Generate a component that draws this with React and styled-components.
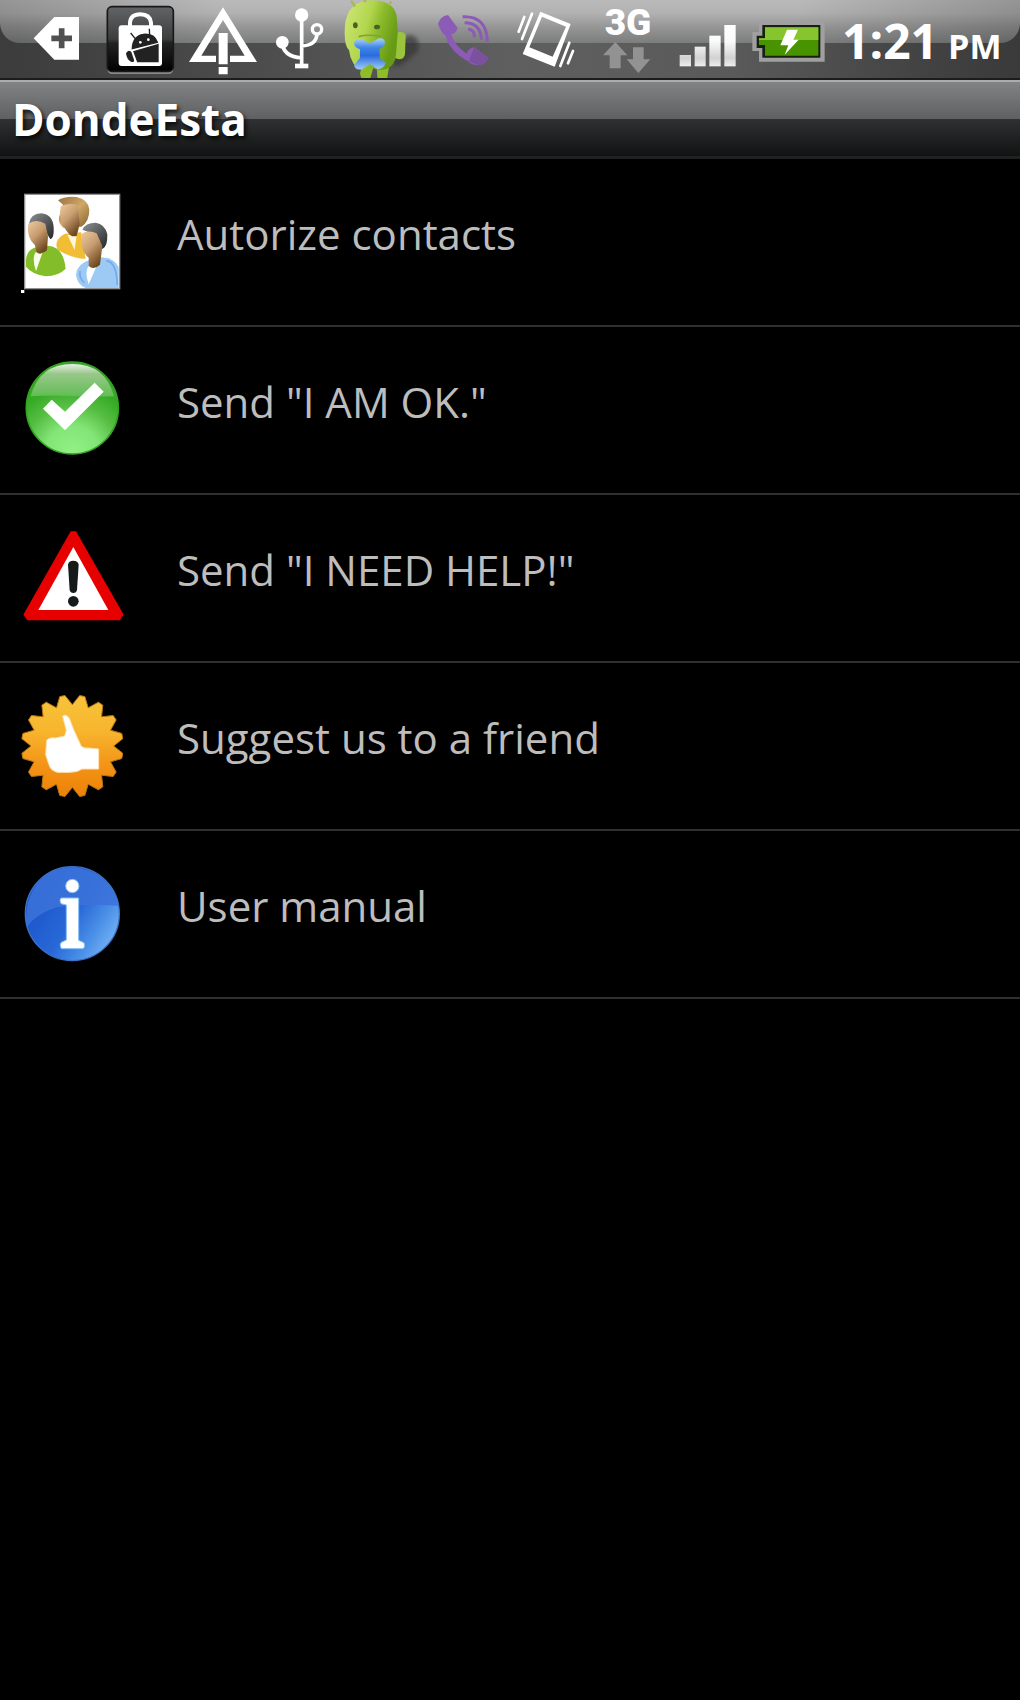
import React from "react";
import styled, { createGlobalStyle } from "styled-components";

const GlobalStyle = createGlobalStyle`
  * { box-sizing: border-box; }
  body {
    margin: 0;
    background: #000;
    font-family: "Open Sans", "Noto Sans", sans-serif;
  }
`;

const Screen = styled.div`
  min-height: 100vh;
  background: #000;
`;

const StatusBar = styled.header`
  position: relative;
  display: flex;
  justify-content: space-between;
  height: 80px;
  padding: 0 20px 0 24px;
  border-bottom: 2px solid #1c1c1c;
  background: linear-gradient(90deg, #3c3c3c 0%, #4a4a4a 22%, #5e5f5e 50%, #5a5a5a 72%, #434343 90%, #3a3a3a 100%);
  overflow: hidden;

  &::before {
    content: "";
    position: absolute;
    inset: 0 0 auto;
    height: 43px;
    border-radius: 0 0 20px 20px;
    background:
      linear-gradient(90deg, rgba(0, 0, 0, 0.2) 0%, rgba(0, 0, 0, 0) 22%, rgba(0, 0, 0, 0) 78%, rgba(0, 0, 0, 0.2) 100%),
      linear-gradient(180deg, #bababa 0%, #b2b2b2 30%, #949494 65%, #7c7d7d 100%);
  }
`;

const StatusGroup = styled.div`
  position: relative;
  display: flex;
`;

const StatusIcon = styled.svg`
  display: block;
  flex: none;
  width: ${(p) => p.$width}px;
  height: 80px;
`;

const Network = styled.div`
  display: flex;
  flex-direction: column;
  align-items: center;
  width: 72px;
  padding-top: 5px;
`;

const NetworkLabel = styled.span`
  color: #fff;
  font-family: Roboto, sans-serif;
  font-weight: 900;
  font-size: 37px;
  line-height: 36px;
`;

const Arrows = styled.svg`
  width: 72px;
  height: 34px;
`;

const Clock = styled.time`
  padding-left: 10px;
  color: #fff;
  font-family: "Open Sans", sans-serif;
  font-weight: 700;
  font-size: 48px;
  line-height: 82px;
  white-space: nowrap;
`;

const Meridiem = styled.span`
  margin-left: 10px;
  font-size: 34px;
`;

const TitleBar = styled.div`
  height: 79px;
  padding-left: 12px;
  border-top: 2px solid #acacac;
  border-bottom: 3px solid #202122;
  background: linear-gradient(180deg, #828385 0, #66686a 28px, #5f6061 37px, #2f3132 37px, #111212 100%);
`;

const Title = styled.h1`
  margin: 0;
  color: #fff;
  font-weight: 700;
  font-size: 44px;
  line-height: 75px;
  text-shadow: 2px 3px 4px rgba(0, 0, 0, 0.8);
`;

const Menu = styled.ul`
  margin: 0;
  padding: 0;
  list-style: none;
`;

const MenuItem = styled.li`
  border-bottom: 2px solid #303030;
`;

const MenuButton = styled.button`
  display: flex;
  align-items: center;
  gap: 54px;
  width: 100%;
  height: 166px;
  padding: 0 21px;
  border: 0;
  background: #000;
  color: #bdbdbd;
  font: inherit;
  text-align: left;
  cursor: pointer;
`;

const MenuIcon = styled.svg`
  flex: none;
  width: 102px;
  height: 102px;
`;

const Label = styled.span`
  padding-bottom: 16px;
  font-size: 42px;
  line-height: 60px;
`;

function BackIcon() {
  return (
    <StatusIcon $width={72} viewBox="72 0 216 240" aria-hidden="true">
      <path d="M101 115 163 51H237V179H163Z" fill="#fff" />
      <path d="M185 85V145M154 115H216" stroke="#505050" strokeWidth="17" />
    </StatusIcon>
  );
}

function MarketIcon() {
  return (
    <StatusIcon $width={88} viewBox="288 0 264 240" aria-hidden="true">
      <defs>
        <linearGradient id="tile" x1="0" y1="0" x2="0" y2="1">
          <stop offset="0" stopColor="#626465" />
          <stop offset=".5" stopColor="#3c3d3e" />
          <stop offset=".56" stopColor="#222" />
          <stop offset="1" stopColor="#000" />
        </linearGradient>
      </defs>
      <rect x="322" y="26" width="198" height="196" rx="14" fill="#888" />
      <rect x="322" y="20" width="198" height="194" rx="14" fill="url(#tile)" stroke="#181818" strokeWidth="5" />
      <path d="M390 84V68Q392 43 421 43T453 68V84" fill="none" stroke="#fff" strokeWidth="12" />
      <rect x="356" y="76" width="130" height="122" rx="9" fill="#fff" />
      <path d="M397 146Q398 108 431 103 463 101 472 127ZM402 155 474 134V185H413ZM392 99 408 119M448 86 449 108" fill="#222" stroke="#222" strokeWidth="4" />
      <path d="M378 160Q385 147 394 156L402 179Q404 187 394 186 380 179 378 160Z" fill="#222" />
      <circle cx="421" cy="127" r="4" fill="#fff" />
      <circle cx="445" cy="119" r="4" fill="#fff" />
    </StatusIcon>
  );
}

function WarningStatusIcon() {
  return (
    <StatusIcon $width={80} viewBox="552 0 240 240" aria-hidden="true">
      <path d="M669 22 771 186H690V167H734L669 60 604 167H648V186H567Z" fill="#fff" />
      <path d="M656 99H683V193H656ZM656 201H683V223H656Z" fill="#fff" />
    </StatusIcon>
  );
}

function UsbIcon() {
  return (
    <StatusIcon $width={72} viewBox="42 0 216 240" aria-hidden="true">
      <g fill="none" stroke="#fff" strokeWidth="11">
        <path d="M155 45V197M97 128Q99 170 155 174M201 102Q199 136 155 138" />
        <circle cx="201" cy="88" r="14" strokeWidth="10" />
        <path d="M135 198H175" strokeWidth="14" />
      </g>
      <circle cx="155" cy="45" r="20" fill="#fff" />
      <circle cx="97" cy="127" r="19" fill="#fff" />
    </StatusIcon>
  );
}

function DroidIcon() {
  return (
    <StatusIcon $width={88} viewBox="258 0 264 240" aria-hidden="true">
      <defs>
        <linearGradient id="droid" x1="0" y1="0" x2="1" y2=".4">
          <stop offset="0" stopColor="#d1e778" />
          <stop offset=".48" stopColor="#b2d64e" />
          <stop offset=".7" stopColor="#8ab92b" />
          <stop offset="1" stopColor="#679b16" />
        </linearGradient>
        <linearGradient id="cross" x1="0" y1="0" x2="0" y2="1">
          <stop offset="0" stopColor="#a9d2fa" />
          <stop offset=".3" stopColor="#3f84e8" />
          <stop offset=".55" stopColor="#2a6bdc" />
          <stop offset="1" stopColor="#a0cbf8" />
        </linearGradient>
        <filter id="soft"><feGaussianBlur stdDeviation="7" /></filter>
      </defs>
      <path d="M430 200Q455 198 472 181L503 154Q513 111 479 104L435 130Z" fill="#303030" opacity=".65" filter="url(#soft)" />
      <path d="M434 104Q440 94 453 96 468 98 467 109L465 163Q463 178 447 178L434 174Z" fill="#99c43b" />
      <path d="M336 195H372L362 231Q358 243 345 242 333 240 330 220ZM380 200H417L412 232Q409 243 397 243 382 242 382 229Z" fill="#8fbd2a" />
      <path d="M284 100Q284 64 291 50 296 28 316 14 336 1 370 1 404 2 424 18 440 32 441 60L443 100 438 165Q434 200 407 208 385 214 368 204L345 212Q322 208 310 190 299 172 297 150 284 140 284 100Z" fill="url(#droid)" />
      <path d="M303 2 315 20M342 0 347 6M424 4 416 16" stroke="#a9b952" strokeWidth="7" />
      <path d="M326 110Q352 102 393 109" fill="none" stroke="#80a42e" strokeWidth="5" />
      <ellipse cx="316" cy="76" rx="7" ry="9" fill="#49621f" />
      <ellipse cx="381" cy="81" rx="9" ry="7" fill="#49621f" />
      <path d="M313 128Q316 115 333 117L359 130 384 116Q401 112 405 126 406 136 389 147V174L407 190Q399 209 382 207L360 192 335 208Q315 211 312 196L330 174V148Q309 139 313 128Z" fill="url(#cross)" />
    </StatusIcon>
  );
}

function CallIcon() {
  return (
    <StatusIcon $width={80} viewBox="522 0 240 240" aria-hidden="true">
      <path d="M564 72Q571 48 594 45L623 84Q617 101 604 103 612 136 650 161 654 144 673 142L716 174Q709 194 686 196 665 196 654 184 596 151 587 107 574 100 564 72Z" fill="#8c5ab7" />
      <g fill="none" stroke="#8c5ab7" strokeWidth="9">
        <path d="M638 50Q711 47 712 126M644 68Q693 69 694 119M655 87Q675 91 673 112" />
      </g>
      <path d="M672 143 716 174Q709 194 686 196L657 184Z" fill="#754e98" opacity=".8" />
    </StatusIcon>
  );
}

function VibrateIcon() {
  return (
    <StatusIcon $width={88} viewBox="12 0 264 240" aria-hidden="true">
      <path fillRule="evenodd" d="M121 35 212 72 164 200 68 162ZM126 50 88 142 158 170 198 80Z" fill="#fff" />
      <path d="M73 51 56 95M96 41 66 117M208 128 181 198M219 153 204 190" stroke="#fff" strokeWidth="8" strokeLinecap="round" />
    </StatusIcon>
  );
}

function NetworkStatus() {
  return (
    <Network>
      <NetworkLabel>3G</NetworkLabel>
      <Arrows viewBox="276 122 216 102" aria-hidden="true">
        <path d="M346 125 382 165H362V204H329V165H309ZM399 141H431V177H451L415 218 380 177H399Z" fill="#929292" />
      </Arrows>
    </Network>
  );
}

function SignalIcon() {
  return (
    <StatusIcon $width={80} viewBox="492 0 240 240" aria-hidden="true">
      <defs>
        <linearGradient id="signal" gradientUnits="userSpaceOnUse" x1="0" y1="75" x2="0" y2="199">
          <stop offset="0" stopColor="#fff" />
          <stop offset=".4" stopColor="#fafafa" />
          <stop offset=".8" stopColor="#d2d2d2" />
          <stop offset="1" stopColor="#eee" />
        </linearGradient>
      </defs>
      <g fill="url(#signal)">
        <rect x="539" y="165" width="34" height="34" />
        <rect x="584" y="140" width="33" height="59" />
        <rect x="628" y="107" width="34" height="92" />
        <rect x="673" y="75" width="34" height="124" />
      </g>
    </StatusIcon>
  );
}

function BatteryIcon() {
  return (
    <StatusIcon $width={88} viewBox="12 0 264 240" aria-hidden="true">
      <path d="M57 63H254V185H57V153H37V96H57Z" fill="#a0a0a0" />
      <path d="M67 75H241V173H67V144H50V107H67Z" fill="#182012" />
      <path d="M75 82H235V167H75V135H57V115H75Z" fill="#489400" />
      <path d="M75 82H235V120H57V115H75Z" fill="#86c52d" />
      <path d="M141 89H174L160 119H176L134 164 145 136H121Z" fill="#fff" />
    </StatusIcon>
  );
}

function ContactsIcon() {
  return (
    <MenuIcon viewBox="63 63 306 306" aria-hidden="true">
      <defs>
        <linearGradient id="skin" x1="0" y1="0" x2=".6" y2="1">
          <stop offset="0" stopColor="#efcb9f" />
          <stop offset=".5" stopColor="#c79d71" />
          <stop offset="1" stopColor="#70491f" />
        </linearGradient>
        <linearGradient id="hair" x1="0" y1="0" x2="1" y2="1">
          <stop offset="0" stopColor="#8e9294" />
          <stop offset="1" stopColor="#252525" />
        </linearGradient>
        <linearGradient id="blond" x1="0" y1="0" x2="1" y2="1">
          <stop offset="0" stopColor="#98713e" />
          <stop offset=".5" stopColor="#d0a767" />
          <stop offset="1" stopColor="#82602e" />
        </linearGradient>
      </defs>
      <rect x="74" y="73" width="285" height="283" fill="#fff" stroke="#909090" strokeWidth="4" />
      <rect x="63" y="360" width="10" height="9" fill="#fff" />
      <path d="M169 225Q170 203 195 191L243 187 257 266Q219 267 172 239Z" fill="#f1bd35" />
      <path d="M202 194 230 196 224 240Z" fill="#fff6d7" />
      <path d="M174 91Q193 78 230 81 265 88 268 119 268 155 244 170L190 173Q174 160 177 142L189 104Z" fill="url(#blond)" />
      <path d="M182 109Q207 96 234 106L239 162 230 198Q213 202 204 188 181 163 180 130Z" fill="url(#skin)" />
      <path d="M78 271Q79 243 103 233L143 227Q190 229 197 296 176 318 137 319 95 312 78 290Z" fill="#83bd28" />
      <path d="M108 246Q122 259 128 246L108 304Q94 261 108 246Z" fill="#f7ffe9" />
      <path d="M87 161Q91 131 124 130 158 133 161 172 163 204 151 208L126 167Z" fill="url(#hair)" />
      <path d="M85 161Q108 145 136 161L144 199 141 241Q127 255 109 246L105 226Q78 200 85 161Z" fill="url(#skin)" />
      <path d="M228 314Q232 281 267 271L306 262Q344 266 356 291V354H257Q232 345 228 314Z" fill="#9ccaf5" />
      <path d="M267 286Q282 299 291 286L266 343Q252 306 267 286Z" fill="#fff" />
      <path d="M247 179Q256 158 287 158 315 162 322 193 323 231 307 237L283 193Z" fill="url(#hair)" />
      <path d="M244 191Q266 178 290 190L307 229 300 284Q281 302 266 288L266 263Q239 243 244 191Z" fill="url(#skin)" />
      <path d="M319 272Q350 276 352 345M241 303Q235 321 253 339" fill="none" stroke="#75aae7" strokeWidth="5" />
    </MenuIcon>
  );
}

function OkIcon() {
  return (
    <MenuIcon viewBox="63 57 306 306" aria-hidden="true">
      <defs>
        <radialGradient id="okBase" cx=".5" cy=".98" r=".72">
          <stop offset="0" stopColor="#93f184" />
          <stop offset=".4" stopColor="#83e577" />
          <stop offset=".72" stopColor="#55bd42" />
          <stop offset="1" stopColor="#35aa25" />
        </radialGradient>
        <linearGradient id="okGloss" x1="0" y1="0" x2="0" y2="1">
          <stop offset="0" stopColor="#e8eee6" />
          <stop offset=".3" stopColor="#98c88a" />
          <stop offset="1" stopColor="#62bd54" />
        </linearGradient>
      </defs>
      <circle cx="217" cy="204" r="138" fill="url(#okBase)" stroke="#35a324" strokeWidth="5" />
      <path d="M92 169Q118 72 217 72T342 169Q280 171 217 168T92 169Z" fill="url(#okGloss)" />
      <path d="M129 206 155 179 195 215 284 128 311 155 195 271Z" fill="#fff" />
    </MenuIcon>
  );
}

function HelpIcon() {
  return (
    <MenuIcon viewBox="63 81 306 306" aria-hidden="true">
      <path d="M212 94H228L371 344 359 361H82L70 344Z" fill="#e70000" />
      <path d="M220 141 325 330H115Z" fill="#fff" />
      <path d="M204 194Q206 182 220 182T236 194L231 270Q229 279 220 279T209 270Z" fill="#151b1b" />
      <circle cx="220" cy="304" r="16" fill="#151b1b" />
    </MenuIcon>
  );
}

const sealPoints = Array.from({ length: 16 }, (_, i) => {
  const at = (deg, r) => {
    const a = ((i * 22.5 + 11.25 + deg) * Math.PI) / 180;
    return `${(217 + r * Math.sin(a)).toFixed(1)},${(228 - r * Math.cos(a)).toFixed(1)}`;
  };
  return [at(-3, 153), at(3, 153), at(11.25, 124)].join(" ");
}).join(" ");

function SuggestIcon() {
  return (
    <MenuIcon viewBox="63 75 306 306" aria-hidden="true">
      <defs>
        <linearGradient id="seal" x1="0" y1="0" x2="0" y2="1">
          <stop offset="0" stopColor="#f6c43b" />
          <stop offset=".35" stopColor="#f8b52e" />
          <stop offset=".7" stopColor="#f39316" />
          <stop offset="1" stopColor="#ed8207" />
        </linearGradient>
      </defs>
      <polygon points={sealPoints} fill="url(#seal)" stroke="#b87512" strokeWidth="3" />
      <path d="M188 139Q198 130 208 145L221 179 244 229Q252 236 266 234L296 237V297L246 297Q233 307 209 307H172Q151 301 147 284L137 254 140 211Q148 201 167 204L194 198 199 181Z" fill="#fff" stroke="#fde0b2" strokeWidth="3" strokeLinejoin="round" />
    </MenuIcon>
  );
}

function ManualIcon() {
  return (
    <MenuIcon viewBox="63 69 306 306" aria-hidden="true">
      <defs>
        <linearGradient id="infoBase" x1=".1" y1=".4" x2=".9" y2=".9">
          <stop offset="0" stopColor="#1d56cc" />
          <stop offset=".45" stopColor="#2868d6" />
          <stop offset=".75" stopColor="#4b91e8" />
          <stop offset="1" stopColor="#79b4f5" />
        </linearGradient>
      </defs>
      <circle cx="217" cy="221" r="141" fill="url(#infoBase)" stroke="#3b73c7" strokeWidth="4" />
      <path d="M80 261Q71 177 119 122 170 69 247 86 334 105 355 197 249 190 171 202 111 220 80 261Z" fill="#3b72da" opacity=".88" />
      <g fill="#fff" stroke="#87bdf7" strokeWidth="3">
        <circle cx="217" cy="138" r="20" />
        <path d="M183 174H236V301L252 308Q257 325 247 326H184Q177 314 184 307L199 300V195L183 191Q177 180 183 174Z" />
      </g>
    </MenuIcon>
  );
}

const items = [
  { label: "Autorize contacts", Icon: ContactsIcon },
  { label: 'Send "I AM OK."', Icon: OkIcon },
  { label: 'Send "I NEED HELP!"', Icon: HelpIcon },
  { label: "Suggest us to a friend", Icon: SuggestIcon },
  { label: "User manual", Icon: ManualIcon },
];

export default function App() {
  return (
    <Screen>
      <GlobalStyle />
      <StatusBar>
        <StatusGroup>
          <BackIcon />
          <MarketIcon />
          <WarningStatusIcon />
          <UsbIcon />
          <DroidIcon />
          <CallIcon />
        </StatusGroup>
        <StatusGroup>
          <VibrateIcon />
          <NetworkStatus />
          <SignalIcon />
          <BatteryIcon />
          <Clock dateTime="13:21">
            1:21<Meridiem>PM</Meridiem>
          </Clock>
        </StatusGroup>
      </StatusBar>
      <TitleBar>
        <Title>DondeEsta</Title>
      </TitleBar>
      <main>
        <Menu>
          {items.map(({ label, Icon }) => (
            <MenuItem key={label}>
              <MenuButton type="button">
                <Icon />
                <Label>{label}</Label>
              </MenuButton>
            </MenuItem>
          ))}
        </Menu>
      </main>
    </Screen>
  );
}
